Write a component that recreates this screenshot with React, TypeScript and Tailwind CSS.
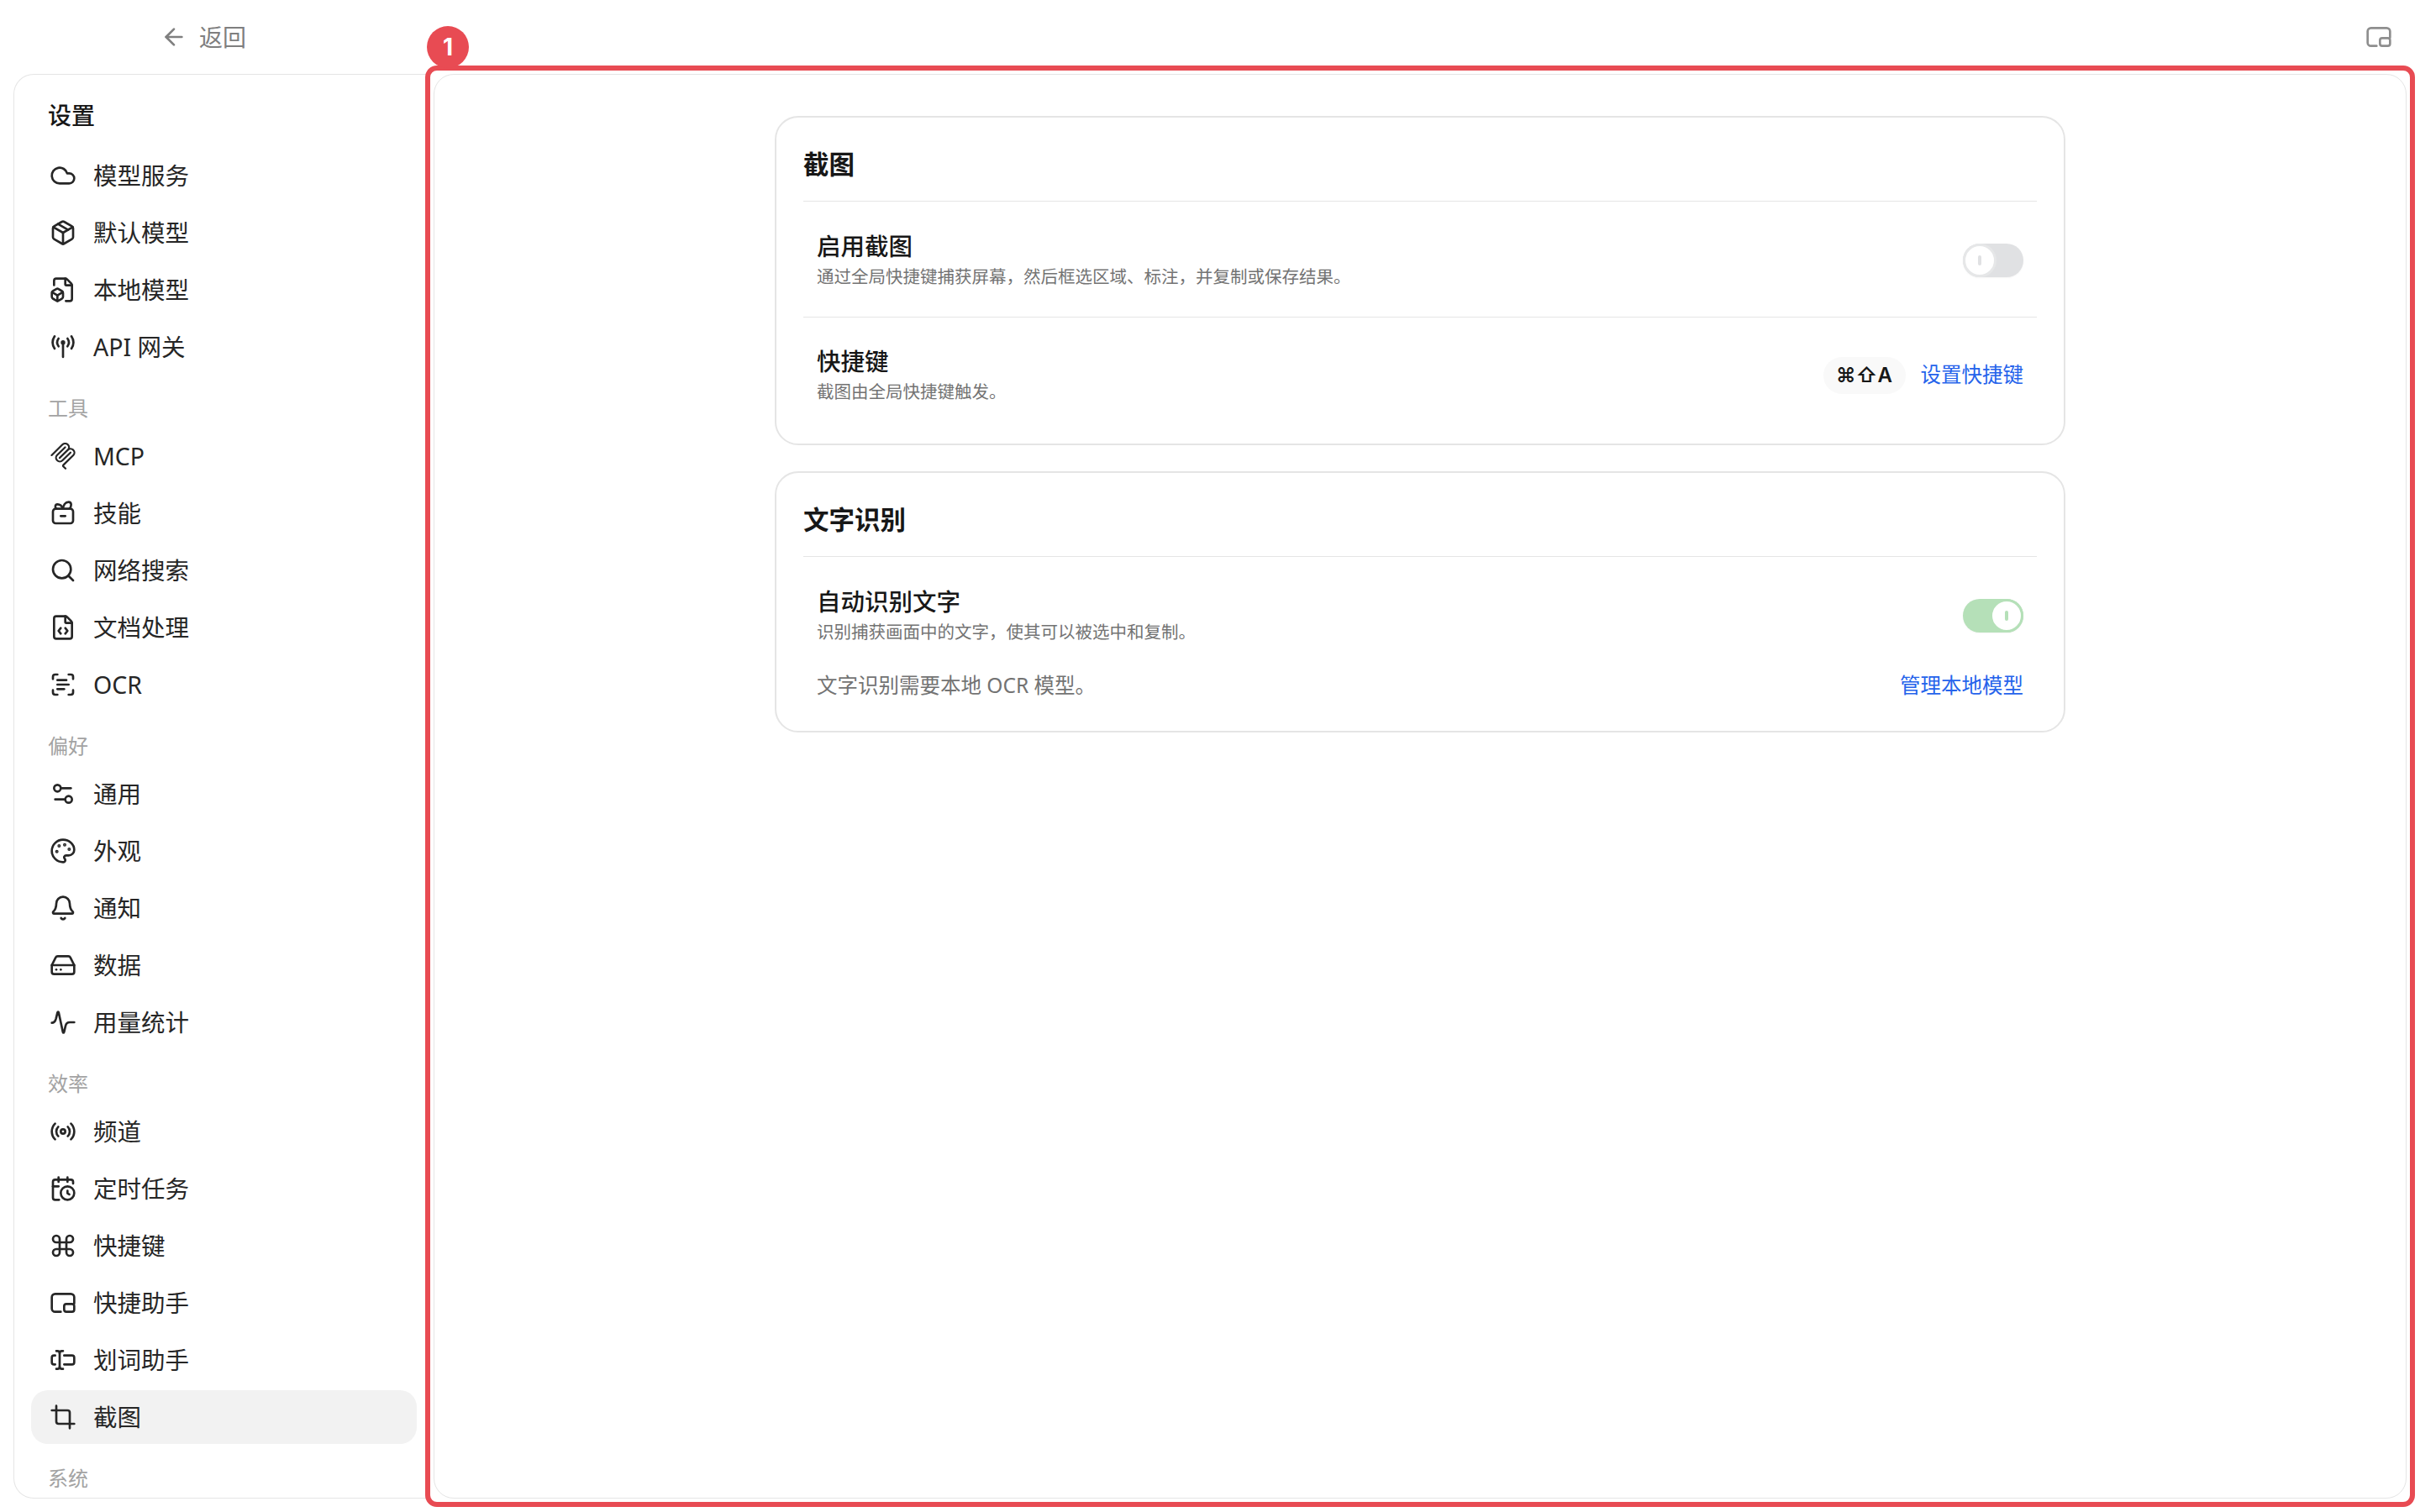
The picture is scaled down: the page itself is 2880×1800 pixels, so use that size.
import {
  ArrowLeft,
  Bell,
  CalendarClock,
  Cloud,
  Command,
  Crop,
  FileBox,
  FileCode,
  HardDrive,
  Package,
  Palette,
  Radio,
  ScanText,
  Search,
  Settings2,
  TextCursorInput,
} from "lucide-react";
import type { ReactNode } from "react";

const Svg = ({ children }: { children: ReactNode }) => (
  <svg width="32" height="32" viewBox="0 0 24 24" fill="none" stroke="currentColor" strokeWidth="2" strokeLinecap="round" strokeLinejoin="round">
    {children}
  </svg>
);

const AntennaIcon = () => (
  <Svg>
    <path d="M12 8v13" />
    <circle cx="12" cy="8" r="1" fill="currentColor" />
    <path d="M8 4.5a6 6 0 0 0 0 7" />
    <path d="M16 4.5a6 6 0 0 1 0 7" />
    <path d="M4.5 2.5a10 10 0 0 0 0 11" />
    <path d="M19.5 2.5a10 10 0 0 1 0 11" />
  </Svg>
);

const McpIcon = () => (
  <svg width="32" height="32" viewBox="0 0 24 24" fill="currentColor" fillRule="evenodd">
    <path d="M15.688 2.343a2.588 2.588 0 00-3.61 0l-9.626 9.44a.863.863 0 01-1.203 0 .823.823 0 010-1.18l9.626-9.44a4.313 4.313 0 016.016 0 4.116 4.116 0 011.204 3.54 4.3 4.3 0 013.609 1.18l.05.05a4.115 4.115 0 010 5.9l-8.706 8.537a.274.274 0 000 .393l1.788 1.754a.823.823 0 010 1.18.863.863 0 01-1.203 0l-1.788-1.753a1.92 1.92 0 010-2.754l8.706-8.538a2.47 2.47 0 000-3.54l-.05-.049a2.588 2.588 0 00-3.607-.003l-7.172 7.034-.002.002-.098.097a.863.863 0 01-1.204 0 .823.823 0 010-1.18l7.273-7.133a2.47 2.47 0 00-.003-3.537z" />
    <path d="M14.485 4.703a.823.823 0 000-1.18.863.863 0 00-1.204 0l-7.119 6.982a4.115 4.115 0 000 5.9 4.314 4.314 0 006.016 0l7.12-6.982a.823.823 0 000-1.18.863.863 0 00-1.204 0l-7.119 6.982a2.588 2.588 0 01-3.61 0 2.47 2.47 0 010-3.54l7.12-6.982z" />
  </svg>
);

const SkillIcon = () => (
  <Svg>
    <rect x="3" y="8" width="18" height="13" rx="2.5" />
    <path d="M10 14.5h4" />
    <path d="M6 8C4.5 6.5 5 4 7 4c2.2 0 4 1.5 5 4" />
    <path d="M12 8c.3-3 2-6 5-6 2.7 0 3 3.5.8 6" />
  </Svg>
);

const PulseIcon = () => (
  <Svg>
    <path d="M2 12.5c2 0 3-1 3.8-4L7 3.5c.3-1.2.9-1.2 1.2 0l3.6 17c.3 1.2.9 1.2 1.2 0l1.3-5.5c.5-2 1.7-3 3.7-3h4" />
  </Svg>
);

const PipIcon = () => (
  <Svg>
    <path d="M22 12.5V7a3 3 0 0 0-3-3H5a3 3 0 0 0-3 3v10a3 3 0 0 0 3 3h5" />
    <rect x="13" y="13" width="9" height="7" rx="2" />
  </Svg>
);

const sections: { label?: string; items: { name: string; icon: ReactNode; active?: boolean }[] }[] = [
  {
    items: [
      { name: "模型服务", icon: <Cloud size={32} /> },
      { name: "默认模型", icon: <Package size={32} /> },
      { name: "本地模型", icon: <FileBox size={32} /> },
      { name: "API 网关", icon: <AntennaIcon /> },
    ],
  },
  {
    label: "工具",
    items: [
      { name: "MCP", icon: <McpIcon /> },
      { name: "技能", icon: <SkillIcon /> },
      { name: "网络搜索", icon: <Search size={32} /> },
      { name: "文档处理", icon: <FileCode size={32} /> },
      { name: "OCR", icon: <ScanText size={32} /> },
    ],
  },
  {
    label: "偏好",
    items: [
      { name: "通用", icon: <Settings2 size={32} /> },
      { name: "外观", icon: <Palette size={32} /> },
      { name: "通知", icon: <Bell size={32} /> },
      { name: "数据", icon: <HardDrive size={32} /> },
      { name: "用量统计", icon: <PulseIcon /> },
    ],
  },
  {
    label: "效率",
    items: [
      { name: "频道", icon: <Radio size={32} /> },
      { name: "定时任务", icon: <CalendarClock size={32} /> },
      { name: "快捷键", icon: <Command size={32} /> },
      { name: "快捷助手", icon: <PipIcon /> },
      { name: "划词助手", icon: <TextCursorInput size={32} /> },
      { name: "截图", icon: <Crop size={32} />, active: true },
    ],
  },
  { label: "系统", items: [] },
];

function Toggle({ on }: { on?: boolean }) {
  return (
    <div className={`flex h-[40px] w-[72px] shrink-0 items-center rounded-full shadow-[0_1px_2px_rgba(0,0,0,0.04)] ${on ? "justify-end bg-[#b5e0b8]" : "justify-start bg-[#e0e1e3]"}`}>
      <div className={`flex size-[40px] items-center justify-center rounded-full border-[3px] bg-white ${on ? "border-[#b5e0b8]" : "border-[#e6e7e8]"}`}>
        <div className={`h-[12px] w-[4px] rounded-full ${on ? "bg-[#b5e0b8]" : "bg-[#e0e1e3]"}`} />
      </div>
    </div>
  );
}

function RowText({ title, desc }: { title: string; desc: string }) {
  return (
    <div>
      <div className="text-[28.5px] leading-[36px] font-medium text-[#171717]">{title}</div>
      <div className="mt-[3px] text-[20.5px] leading-[30px] text-[#737373]">{desc}</div>
    </div>
  );
}

function CardHeader({ title }: { title: string }) {
  return (
    <div className="border-b border-[#e5e5e5] pt-[37px] pb-[26px] text-[30.5px] leading-[36px] font-semibold text-[#171717]">
      {title}
    </div>
  );
}

export default function App() {
  return (
    <div className="flex h-[1800px] w-full flex-col overflow-hidden bg-white font-['Noto_Sans','Noto_Sans_CJK_SC',sans-serif]">
      <div className="flex h-[88px] shrink-0 items-center justify-between pr-[33px] pl-[191px]">
        <div className="flex items-center gap-[14px] text-[#7f7f7f]">
          <ArrowLeft size={32} />
          <span className="text-[28px]">返回</span>
        </div>
        <div className="text-[#8e8e8e]">
          <PipIcon />
        </div>
      </div>

      <div className="flex min-h-0 flex-1 pr-[16px] pb-[16px] pl-[16px]">
        <aside className="w-[492px] shrink-0 overflow-hidden rounded-l-[24px] border-y border-l border-[#e5e5e5] pr-[12px] pl-[20px]">
          <div className="mt-[30px] mb-[22px] px-[20px] text-[28px] leading-[36px] font-medium text-[#171717]">设置</div>
          {sections.map((s, i) => (
            <div key={i}>
              {s.label && (
                <div className="mt-[23px] mb-[7px] px-[20px] text-[24px] leading-[36px] text-[#a3a3a3]">{s.label}</div>
              )}
              <div className="flex flex-col gap-[4px]">
                {s.items.map((it) => (
                  <div
                    key={it.name}
                    className={`flex h-[64px] items-center gap-[20px] rounded-[20px] pl-[22px] text-[28.5px] text-[#262626] ${it.active ? "bg-[#f2f2f2]" : ""}`}
                  >
                    {it.icon}
                    <span>{it.name}</span>
                  </div>
                ))}
              </div>
            </div>
          ))}
        </aside>

        <main className="relative ml-[8px] min-w-0 flex-1 rounded-[24px] border border-[#e5e5e5]">
          <div className="mx-auto flex w-[1536px] flex-col gap-[31px] pt-[49px]">
            <section className="rounded-[28px] border-2 border-[#e5e5e5] px-[32px]">
              <CardHeader title="截图" />
              <div className="flex items-center justify-between border-b border-[#e5e5e5] px-[16px] pt-[35px] pb-[33px]">
                <RowText title="启用截图" desc="通过全局快捷键捕获屏幕，然后框选区域、标注，并复制或保存结果。" />
                <Toggle />
              </div>
              <div className="flex items-center justify-between px-[16px] pt-[34px] pb-[47px]">
                <RowText title="快捷键" desc="截图由全局快捷键触发。" />
                <div className="flex items-center gap-[18px]">
                  <span className="flex h-[44px] w-[98px] items-center justify-center rounded-full bg-[#f9f9f9] font-['Inter','DejaVu_Sans',sans-serif] text-[24px] font-semibold text-[#171717]">
                    ⌘⇧A
                  </span>
                  <span className="text-[24.5px] text-[#2563eb]">设置快捷键</span>
                </div>
              </div>
            </section>

            <section className="rounded-[28px] border-2 border-[#e5e5e5] px-[32px]">
              <CardHeader title="文字识别" />
              <div className="px-[16px] pt-[35px] pb-[36px]">
                <div className="flex items-center justify-between">
                  <RowText title="自动识别文字" desc="识别捕获画面中的文字，使其可以被选中和复制。" />
                  <Toggle on />
                </div>
                <div className="mt-[31px] flex items-center justify-between text-[24.5px] leading-[36px]">
                  <span className="text-[#737373]">文字识别需要本地 OCR 模型。</span>
                  <span className="text-[#2563eb]">管理本地模型</span>
                </div>
              </div>
            </section>
          </div>

          <div className="pointer-events-none absolute -inset-[11px] rounded-[14px] border-[6px] border-[#e84b53]" />
          <div className="absolute top-[-58px] left-[-9px] flex size-[50px] items-center justify-center rounded-full bg-[#e84b53] font-['Inter',sans-serif] text-[28px] font-bold text-white">
            1
          </div>
        </main>
      </div>
    </div>
  );
}
